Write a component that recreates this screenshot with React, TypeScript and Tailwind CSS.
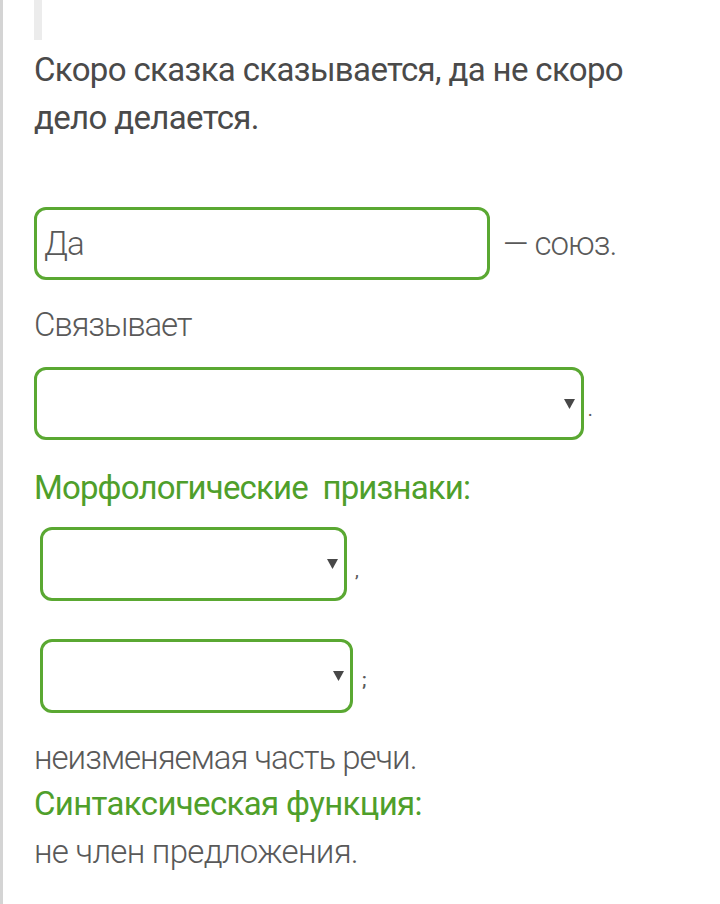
function Arrow() {
  return (
    <svg width="11" height="10" viewBox="0 0 11 10" className="block">
      <path d="M0 0h11L5.5 10z" fill="#484848" />
    </svg>
  );
}

export default function App() {
  return (
    <div className="min-h-screen bg-white border-l-[3px] border-[#d4d4d4] font-['Roboto',sans-serif] text-[#595959]">
      <div className="pl-[31px] pr-4">
        {/* top bar */}
        <div className="w-2 h-10 bg-[#ececec]" />

        {/* sentence */}
        <p className="mt-[6px] text-[33px] leading-[48px] tracking-[-0.65px] text-[#4a4a4a]">
          Скоро сказка сказывается, да не скоро
          <br />
          дело делается.
        </p>

        {/* input row */}
        <div className="mt-[65px] flex items-center">
          <div className="w-[456px] h-[73px] border-[3px] border-[#5aa832] rounded-xl flex items-center pl-[7px] text-[33px] font-light tracking-[-1px]">
            Да
          </div>
          <span className="ml-[13px] text-[33px] font-light tracking-[-1px]">— союз.</span>
        </div>

        <p className="mt-[21px] text-[33px] leading-[48px] font-light tracking-[-1.2px]">Связывает</p>

        {/* select 1 */}
        <div className="mt-[18px] flex items-center">
          <div className="w-[550px] h-[73px] border-[3px] border-[#5aa832] rounded-xl flex items-center justify-end pr-[6px]">
            <Arrow />
          </div>
          <span className="ml-[4px] mt-[14px] text-[16px] font-medium leading-none">.</span>
        </div>

        <p className="mt-[24px] text-[33px] leading-[48px] text-[#4f9f2b] tracking-[-0.85px]">
          Морфологические&nbsp; признаки:
        </p>

        {/* select 2 */}
        <div className="mt-[15px] ml-[6px] flex items-center">
          <div className="w-[307px] h-[74px] border-[3px] border-[#5aa832] rounded-xl flex items-center justify-end pr-[6px]">
            <Arrow />
          </div>
          <span className="ml-[8px] mt-[14px] text-[17px] font-medium leading-none">,</span>
        </div>

        {/* select 3 */}
        <div className="mt-[38px] ml-[6px] flex items-center">
          <div className="w-[313px] h-[74px] border-[3px] border-[#5aa832] rounded-xl flex items-center justify-end pr-[6px]">
            <Arrow />
          </div>
          <span className="ml-[9px] mt-[6px] text-[19px] font-medium leading-none">;</span>
        </div>

        <p className="mt-[21px] text-[33px] leading-[47px] font-light tracking-[-1px]">
          неизменяемая часть речи.
        </p>
        <p className="text-[33px] leading-[46px] text-[#4f9f2b] tracking-[-0.65px]">Синтаксическая функция:</p>
        <p className="text-[33px] leading-[50px] font-light tracking-[-0.7px]">не член предложения.</p>
      </div>
    </div>
  );
}
